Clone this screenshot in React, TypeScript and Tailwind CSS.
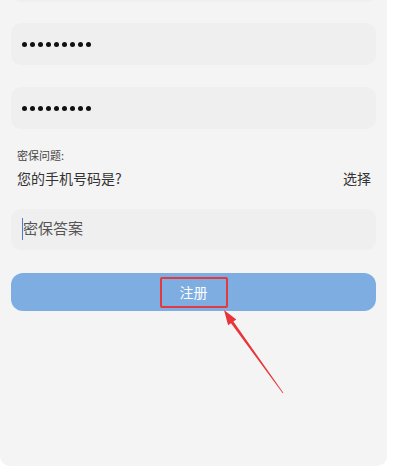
import React from "react";

const font = { fontFamily: '"Noto Sans CJK SC", "Noto Sans", sans-serif' };

function Dots() {
  return (
    <div className="flex items-center gap-[3px]">
      {Array.from({ length: 9 }).map((_, i) => (
        <span key={i} className="block w-[5px] h-[5px] rounded-full bg-[#111]" />
      ))}
    </div>
  );
}

export default function App() {
  return (
    <div className="w-[396px] h-[468px] bg-white overflow-hidden" style={font}>
      <div className="relative w-[387px] h-[466px] bg-[#f4f4f4] rounded-b-[10px] px-[11px] overflow-hidden">
        {/* top field, scrolled mostly out of view */}
        <div className="h-[42px] -mt-[40px] w-[365px] rounded-[10px] bg-[#efefef]" />

        <div className="mt-[21px] h-[42px] w-[365px] rounded-[10px] bg-[#efefef] flex items-center pl-[11px]">
          <Dots />
        </div>
        <div className="mt-[22px] h-[42px] w-[365px] rounded-[10px] bg-[#efefef] flex items-center pl-[11px]">
          <Dots />
        </div>

        <div className="mt-[19px] pl-[6px] text-[11px] leading-[14px] text-[#444]">密保问题:</div>
        <div className="mt-[7px] flex items-center justify-between pl-[6px] pr-[5px] text-[14px] leading-[18px] text-[#333]">
          <span>您的手机号码是?</span>
          <span>选择</span>
        </div>

        <div className="mt-[22px] h-[41px] w-[365px] rounded-[10px] bg-[#efefef] flex items-center pl-[11px] pb-[2px]">
          <span className="w-px h-[22px] bg-[#4a7fd0]" />
          <span className="text-[15px] text-[#555]">密保答案</span>
        </div>

        <div className="mt-[23px] h-[38px] w-[365px] rounded-[12px] bg-[#7eade2] flex items-center justify-center">
          <div className="w-[68px] h-[31px] border-2 border-[#e23a3f] rounded-[2px] flex items-center justify-center">
            <span className="text-[14px] text-white">注册</span>
          </div>
        </div>

        <svg className="absolute left-0 top-0 pointer-events-none" width="387" height="466">
          <polygon
            points="224,310 236.3,319.5 233.4,321.5 283.3,392.8 282.7,393.2 231,323.3 228.1,325.3"
            fill="#e8353a"
          />
        </svg>
      </div>
    </div>
  );
}
